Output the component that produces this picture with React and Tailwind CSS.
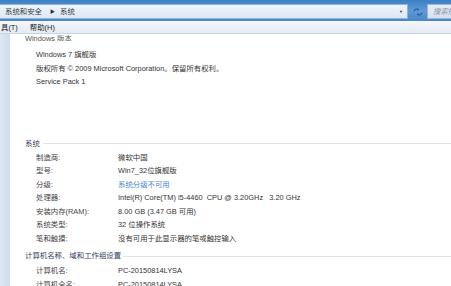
import React from "react";

const font = { fontFamily: '"Liberation Sans", "Noto Sans CJK SC", sans-serif' };

const rows = [
  ["制造商:", "微软中国"],
  ["型号:", "Win7_32位旗舰版"],
  ["分级:", "系统分级不可用", true],
  ["处理器:", "Intel(R) Core(TM) i5-4460  CPU @ 3.20GHz   3.20 GHz"],
  ["安装内存(RAM):", "8.00 GB (3.47 GB 可用)"],
  ["系统类型:", "32 位操作系统"],
  ["笔和触摸:", "没有可用于此显示器的笔或触控输入"],
];

const Row = ({ label, value, link }) => (
  <div className="flex h-[13.5px] items-center whitespace-pre">
    <div className="w-[82px] pl-[26px] box-content text-[#444]">{label}</div>
    <div className={link ? "text-[#4a86c8]" : "text-[#333]"}>{value}</div>
  </div>
);

const Section = ({ title }) => (
  <div className="flex h-[14px] items-center pl-[15px]">
    <span className="text-[#34405a] mr-[3px]">{title}</span>
    <div className="flex-1 h-px bg-[#dfe2e6]" />
  </div>
);

export default function App() {
  return (
    <div className="w-[451px] h-[286px] overflow-hidden bg-white text-[7.4px] leading-none" style={font}>
      {/* address bar */}
      <div className="h-[21px] bg-gradient-to-b from-[#3d7fc4] via-[#5d9ad8] to-[#4a87c9] flex items-center pt-[2px] gap-[3px]">
        <div className="flex-1 h-[15px] bg-gradient-to-b from-[#eef5fc] to-[#dbe9f7] border border-[#8fb3da] border-l-0 flex items-center pl-[5px]">
          <span className="text-[#3a3a3a]">系统和安全</span>
          <span className="ml-[8px] mr-[5px] text-[5px] text-[#333]">▶</span>
          <span className="text-[#3a3a3a]">系统</span>
          <span className="ml-auto mr-[4px] text-[4px] text-[#333]">▼</span>
        </div>
        <div className="w-[13px] h-[15px] flex items-center justify-center">
          <svg width="10" height="8" viewBox="0 0 11 9">
            <path d="M1 4 a3 3 0 0 1 5 -2" stroke="#2a5e96" strokeWidth="1.2" fill="none" />
            <path d="M10 5 a3 3 0 0 1 -5 2" stroke="#2a5e96" strokeWidth="1.2" fill="none" />
            <path d="M5 0 l2 2 l-2 1.5z" fill="#2a5e96" />
            <path d="M6 9 l-2 -2 l2 -1.5z" fill="#2a5e96" />
          </svg>
        </div>
        <div className="w-[24px] h-[15px] bg-gradient-to-b from-[#e8eef6] to-[#d6e0ee] border border-[#9ab6d6] border-r-0 flex items-center pl-[5px] overflow-hidden">
          <span className="italic text-[#8a96a8] whitespace-nowrap">搜索控</span>
        </div>
      </div>
      {/* menu bar */}
      <div className="h-[13px] bg-gradient-to-b from-[#f4f7fb] to-[#e4ebf5] flex items-center pt-[2px] pl-[1px] border-b border-[#c9d5e5]">
        <span className="text-[#222]">具(T)</span>
        <span className="ml-[12px] text-[#222]">帮助(H)</span>
      </div>
      {/* content */}
      <div className="flex">
        <div className="w-[10px] bg-gradient-to-r from-[#dfe8f4] to-[#cfdbec] h-[260px]" />
        <div className="flex-1">
          <div className="h-[7px] pl-[15px] text-[#555] flex items-end overflow-hidden">
            <span className="translate-y-[1px]">Windows 版本</span>
          </div>
          <div className="mt-[7px] flex flex-col">
            <div className="h-[13.5px] flex items-center pl-[26px] text-[#333]">Windows 7 旗舰版</div>
            <div className="h-[13.5px] flex items-center pl-[26px] text-[#333]">版权所有 © 2009 Microsoft Corporation。保留所有权利。</div>
            <div className="h-[13.5px] flex items-center pl-[26px] text-[#333]">Service Pack 1</div>
          </div>
          <div className="h-[48px]" />
          <Section title="系统" />
          {rows.map(([l, v, link]) => (
            <Row key={l} label={l} value={v} link={link} />
          ))}
          <div className="h-[4px]" />
          <Section title="计算机名称、域和工作组设置" />
          <div className="h-[1px]" />
          <Row label="计算机名:" value="PC-20150814LYSA" />
          <Row label="计算机全名:" value="PC-20150814LYSA" />
        </div>
      </div>
    </div>
  );
}
